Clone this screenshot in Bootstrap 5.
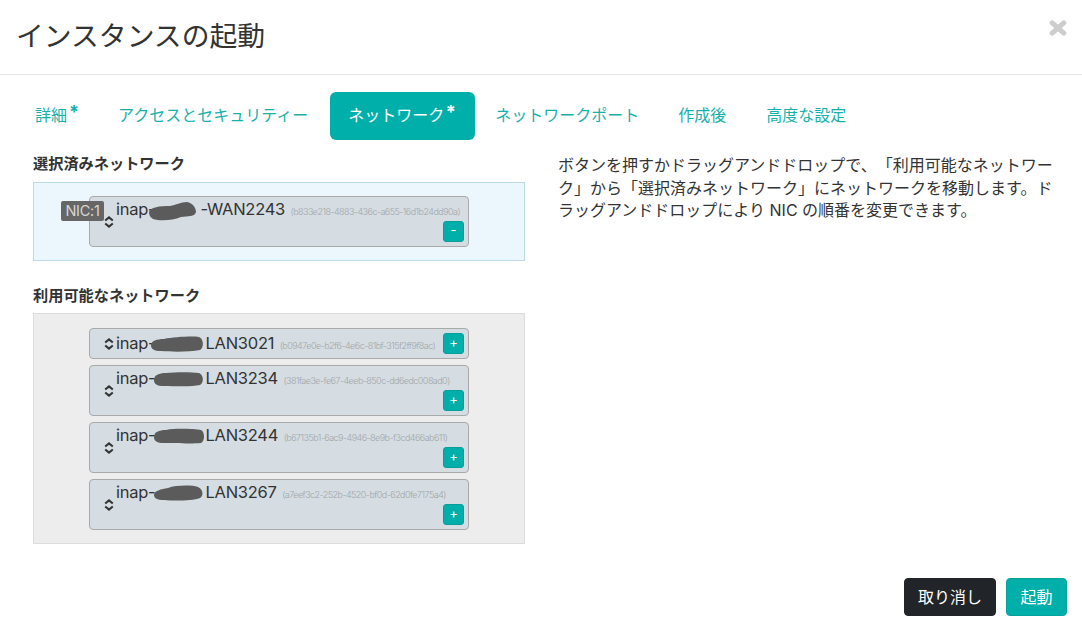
<!DOCTYPE html>
<html lang="ja">
<head>
<meta charset="utf-8">
<title>インスタンスの起動</title>
<link rel="stylesheet" href="https://cdn.jsdelivr.net/npm/bootstrap@5.3.0/dist/css/bootstrap.min.css">
<style>
html,body{height:100%;overflow:hidden}
body{font-family:"Inter","Noto Sans CJK JP",sans-serif;font-size:16px;color:#333;background:#fff;text-spacing-trim:space-all}
.wiz-shell{height:631px;display:flex;flex-direction:column}
.wiz-head{height:75px;padding:0 15px 0 16px;border-bottom:1px solid #e5e5e5;display:flex;align-items:flex-start;justify-content:space-between}
.wiz-title{font-size:27.8px;font-weight:400;line-height:36px;margin:18px 0 0;color:#333}
.wiz-close{margin-top:20px;display:block;line-height:0}
.wiz-tabs{padding:17px 0 0 17px;gap:3px}
.wiz-tabs .nav-link{color:#17b1ac;padding:0 18px;height:48px;line-height:46px;border-radius:6px;font-size:16px}
.wiz-tabs .nav-link.active{background:#00afaa;color:#fff}
.wiz-tabs .nav-item:nth-child(3){margin-left:1px}
.wiz-tabs .nav-item:nth-child(4){margin-left:-1px}
.wiz-tabs .nav-item:nth-child(6){margin-left:1px}
.wiz-tabs sup{font-size:18px;top:-3px;line-height:0;display:inline-block;width:12px;text-align:right;font-weight:700}
.wiz-tabs .active sup{width:13px;text-align:center}
.wiz-body{padding:0 18px;margin-top:12px}
.wiz-body .row{--bs-gutter-x:0;margin:0}
.col-left{padding:0 16px 0 15px}
.col-right{padding:2px 10px 0 17px;font-size:16px;line-height:22.5px}
.sec-title{font-size:15.2px;font-weight:700;line-height:24px;margin:0 0 6px;color:#333}
.sec-gap{margin:23px 0 5px}
.drop-zone{padding:13px 55px;border:1px solid #bcdbe6;background:#ecf7fd}
.drop-grey{background:#ededed;border-color:#dcdcdc;padding:14px 55px 13px}
.net-item{position:relative;background:#d5dde2;border:1px solid #a9a9a9;border-radius:4px;padding:0 4px 2px 26px;height:51px;color:#333}
.net-item+.net-item{margin-top:6px}
.net-short{height:31px;display:flex;justify-content:space-between;align-items:center;padding-bottom:0}
.net-short .net-line{margin-bottom:2px}
.net-line{font-size:16.5px;line-height:24px;height:24px;white-space:nowrap;letter-spacing:-.25px}
.net-uuid{font-size:9px;color:#a2a6a9;margin-left:5.5px;letter-spacing:-.54px;font-weight:300}
.blob{display:inline-block;vertical-align:-4px}
.blob-wide{margin:0 0 0 -5px}
.blob-mid{margin:0 0 0 -2px}
.blob-hide{margin:0 3px 0 -7px;vertical-align:-6px}
.sort-ico{position:absolute;left:14px;top:50%;margin-top:-6px;display:block}
.nic-tag{position:absolute;left:-29px;top:4px;background:#666;color:#d6d6d6;font-size:14.5px;line-height:20px;height:20px;width:43px;text-align:center;border-radius:2px;letter-spacing:-.3px}
.add-row{display:flex;justify-content:flex-end}
.mini-btn{flex-shrink:0;width:21px;height:21px;padding:0 0 3px;font-size:13px;line-height:14px;background:#00afaa;border:1px solid #05a09b;color:#fff;border-radius:3px}
.wiz-foot{margin-top:auto;padding:0 15px 15px;display:flex;justify-content:flex-end;gap:10px}
.foot-btn{height:38px;font-size:16px;line-height:24px;padding:6px 13px;border-radius:4px;color:#fff;min-width:61px}
.foot-dark{background:#212529;border:1px solid #212529}
.foot-teal{background:#00afaa;border:1px solid #05a39e}
</style>
</head>
<body>
<div class="wiz-shell">
  <div class="wiz-head">
    <h4 class="wiz-title">インスタンスの起動</h4>
    <a href="#" class="wiz-close" aria-label="close"><svg width="18" height="16" viewBox="0 0 18 16"><path d="M3.2 2.8 14.8 13.2M14.8 2.8 3.2 13.2" stroke="#cdcdcd" stroke-width="5" stroke-linecap="round"/></svg></a>
  </div>
  <ul class="nav nav-pills wiz-tabs">
    <li class="nav-item"><a class="nav-link" href="#">詳細<sup>*</sup></a></li>
    <li class="nav-item"><a class="nav-link" href="#">アクセスとセキュリティー</a></li>
    <li class="nav-item"><a class="nav-link active" href="#">ネットワーク<sup>*</sup></a></li>
    <li class="nav-item"><a class="nav-link" href="#">ネットワークポート</a></li>
    <li class="nav-item"><a class="nav-link" href="#">作成後</a></li>
    <li class="nav-item"><a class="nav-link" href="#">高度な設定</a></li>
  </ul>
  <div class="wiz-body">
    <div class="row">
      <div class="col-6 col-left">
        <h5 class="sec-title">選択済みネットワーク</h5>
        <div class="drop-zone">
          <div class="net-item">
            <svg class="sort-ico" width="10" height="12" viewBox="0 0 10 12"><path d="M1.2 4.6 5 1.4 8.8 4.6M1.2 7.4 5 10.6 8.8 7.4" fill="none" stroke="#333" stroke-width="2"/></svg>
            <span class="nic-tag">NIC:1</span>
            <div class="net-line">inap-<svg class="blob blob-hide" width="49" height="20" viewBox="0 0 49 20"><path d="M1 11C2 6 12 5 22 5 28 4 33 1 39 1 44 2 48 6 48 11 47 16 40 15 33 16 24 20 11 20 5 18 2 16 1 14 1 11Z" fill="#5b5b5b"/></svg>-WAN2243<span class="net-uuid">(b833e218-4883-436c-a655-16d1b24dd90a)</span></div>
            <div class="add-row"><button class="mini-btn" type="button">-</button></div>
          </div>
        </div>
        <h5 class="sec-title sec-gap">利用可能なネットワーク</h5>
        <div class="drop-zone drop-grey">
          <div class="net-item net-short">
            <svg class="sort-ico" width="10" height="12" viewBox="0 0 10 12"><path d="M1.2 4.6 5 1.4 8.8 4.6M1.2 7.4 5 10.6 8.8 7.4" fill="none" stroke="#333" stroke-width="2"/></svg>
            <div class="net-line">inap-<svg class="blob blob-wide" width="55" height="18" viewBox="0 0 55 18"><path d="M1 10C1 6 7 4 14 4 24 2 42 1 49 2 54 4 54 13 50 15 40 17 22 17 11 16 4 16 1 14 1 10Z" fill="#5b5b5b"/></svg>LAN3021<span class="net-uuid">(b0947e0e-b2f6-4e6c-81bf-315f2ff9f8ac)</span></div>
            <button class="mini-btn" type="button">+</button>
          </div>
          <div class="net-item">
            <svg class="sort-ico" width="10" height="12" viewBox="0 0 10 12"><path d="M1.2 4.6 5 1.4 8.8 4.6M1.2 7.4 5 10.6 8.8 7.4" fill="none" stroke="#333" stroke-width="2"/></svg>
            <div class="net-line">inap-<svg class="blob blob-mid" width="52" height="18" viewBox="0 0 52 18"><path d="M1 10C1 5 6 3 13 3 23 2 39 2 46 3 51 5 51 13 47 15 39 17 21 16 11 16 4 16 1 14 1 10Z" fill="#5b5b5b"/></svg>LAN3234<span class="net-uuid">(381fae3e-fe67-4eeb-850c-dd6edc008ad0)</span></div>
            <div class="add-row"><button class="mini-btn" type="button">+</button></div>
          </div>
          <div class="net-item">
            <svg class="sort-ico" width="10" height="12" viewBox="0 0 10 12"><path d="M1.2 4.6 5 1.4 8.8 4.6M1.2 7.4 5 10.6 8.8 7.4" fill="none" stroke="#333" stroke-width="2"/></svg>
            <div class="net-line">inap-<svg class="blob blob-mid" width="52" height="18" viewBox="0 0 52 18"><path d="M1 10C1 5 6 3 13 3 23 1 41 2 48 3 52 5 52 14 48 16 38 17 21 16 11 16 4 16 1 14 1 10Z" fill="#5b5b5b"/></svg>LAN3244<span class="net-uuid">(b67135b1-6ac9-4946-8e9b-f3cd466ab611)</span></div>
            <div class="add-row"><button class="mini-btn" type="button">+</button></div>
          </div>
          <div class="net-item">
            <svg class="sort-ico" width="10" height="12" viewBox="0 0 10 12"><path d="M1.2 4.6 5 1.4 8.8 4.6M1.2 7.4 5 10.6 8.8 7.4" fill="none" stroke="#333" stroke-width="2"/></svg>
            <div class="net-line">inap-<svg class="blob blob-mid" width="52" height="18" viewBox="0 0 52 18"><path d="M1 11C1 7 8 5 15 4 23 1 39 1 45 3 50 5 51 12 47 14 39 17 21 17 11 16 4 16 1 14 1 11Z" fill="#5b5b5b"/></svg>LAN3267<span class="net-uuid">(a7eef3c2-252b-4520-bf0d-62d0fe7175a4)</span></div>
            <div class="add-row"><button class="mini-btn" type="button">+</button></div>
          </div>
        </div>
      </div>
      <div class="col-6 col-right">
        <p class="mb-0">ボタンを押すかドラッグアンドドロップで、「利用可能なネットワーク」から「選択済みネットワーク」にネットワークを移動します。ドラッグアンドドロップにより NIC の順番を変更できます。</p>
      </div>
    </div>
  </div>
  <div class="wiz-foot">
    <button class="btn foot-btn foot-dark" type="button">取り消し</button>
    <button class="btn foot-btn foot-teal" type="button">起動</button>
  </div>
</div>
<script src="https://cdn.jsdelivr.net/npm/bootstrap@5.3.0/dist/js/bootstrap.bundle.min.js"></script>
</body>
</html>
